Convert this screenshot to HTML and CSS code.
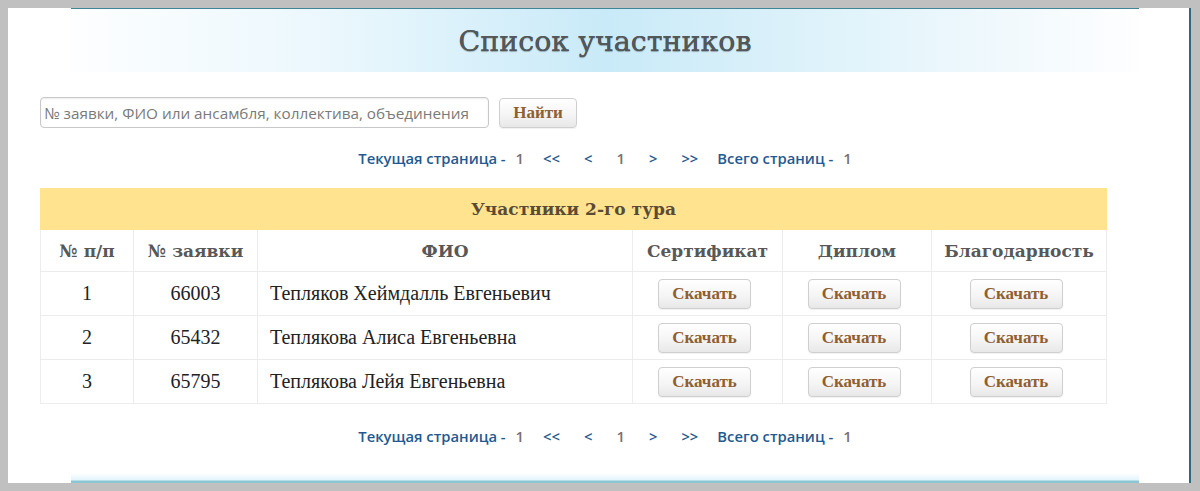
FILE: index.html
```html
<!DOCTYPE html>
<html lang="ru">
<head>
<meta charset="utf-8">
<title>Список участников</title>
<link rel="stylesheet" href="styles.css">
</head>
<body>
<div class="panel">
  <div class="banner"><h1 class="title">Список участников</h1></div>
  <div class="content">
    <form class="search">
      <input class="search-input" type="text" placeholder="№ заявки, ФИО или ансамбля, коллектива, объединения">
      <button class="btn btn-find" type="button">Найти</button>
    </form>
    <div class="pager">
      <span class="lbl">Текущая страница -</span><span class="num n1">1</span>
      <span class="lnk l1">&lt;&lt;</span><span class="lnk l2">&lt;</span><span class="num n2">1</span><span class="lnk l2">&gt;</span><span class="lnk l1b">&gt;&gt;</span>
      <span class="lbl l-tot">Всего страниц -</span><span class="num n1">1</span>
    </div>
    <table class="tbl">
      <colgroup>
        <col class="c1"><col class="c2"><col class="c3"><col class="c4"><col class="c5"><col class="c6">
      </colgroup>
      <thead>
        <tr><th class="cap" colspan="6">Участники 2-го тура</th></tr>
        <tr class="hdr"><th>№ п/п</th><th>№ заявки</th><th>ФИО</th><th>Сертификат</th><th>Диплом</th><th>Благодарность</th></tr>
      </thead>
      <tbody>
        <tr><td>1</td><td>66003</td><td class="name">Тепляков Хеймдалль Евгеньевич</td><td><button class="btn">Скачать</button></td><td><button class="btn">Скачать</button></td><td><button class="btn">Скачать</button></td></tr>
        <tr><td>2</td><td>65432</td><td class="name">Теплякова Алиса Евгеньевна</td><td><button class="btn">Скачать</button></td><td><button class="btn">Скачать</button></td><td><button class="btn">Скачать</button></td></tr>
        <tr><td>3</td><td>65795</td><td class="name">Теплякова Лейя Евгеньевна</td><td><button class="btn">Скачать</button></td><td><button class="btn">Скачать</button></td><td><button class="btn">Скачать</button></td></tr>
      </tbody>
    </table>
    <div class="pager pager-bottom">
      <span class="lbl">Текущая страница -</span><span class="num n1">1</span>
      <span class="lnk l1">&lt;&lt;</span><span class="lnk l2">&lt;</span><span class="num n2">1</span><span class="lnk l2">&gt;</span><span class="lnk l1b">&gt;&gt;</span>
      <span class="lbl l-tot">Всего страниц -</span><span class="num n1">1</span>
    </div>
  </div>
  <div class="footer-line"></div>
</div>
</body>
</html>
```
FILE: styles.css
```css
* { box-sizing: border-box; }
html, body { margin: 0; padding: 0; }
body {
  background: #c0c0c0;
  padding: 8px 0 0 8px;
  height: 491px;
  overflow: hidden;
}
.panel {
  width: 1183px;
  height: 475px;
  background: #fff;
  border-right: 2px solid #2f6a7c;
  display: flex;
  flex-direction: column;
}
.banner {
  margin-left: 63px;
  width: 1068px;
  height: 64px;
  border-top: 1px solid #3f8595;
  background: linear-gradient(to right, #fdfeff 0%, #eaf7fd 25%, #c9eaf8 50%, #e3f4fb 75%, #fefeff 100%);
  display: flex;
  align-items: center;
  justify-content: center;
}
.title {
  margin: 0;
  font-family: "DejaVu Serif", Georgia, serif;
  font-weight: normal;
  font-size: 28.5px;
  color: #52585a;
  text-shadow: 0 1px 1px rgba(0,0,0,0.3), 0 0 0.4px #52585a;
  padding-top: 2px;
}
.content { padding-left: 32px; }
.search {
  margin: 25px 0 0;
  display: flex;
  align-items: center;
}
.search-input {
  width: 449px;
  height: 31px;
  border: 1px solid #c8c8c8;
  border-radius: 4px;
  padding: 0 3px;
  font-family: "Open Sans", sans-serif;
  font-size: 15.3px;
  color: #333;
  box-shadow: inset 0 1px 2px rgba(0,0,0,0.08);
}
.search-input::placeholder { color: #7a7a7a; }
.btn {
  font-family: "Liberation Serif", "Times New Roman", serif;
  font-weight: bold;
  font-size: 17px;
  color: #8f5f30;
  background: linear-gradient(to bottom, #ffffff 0%, #f5f5f5 55%, #e8e8e8 100%);
  border: 1px solid #cfcfcf;
  border-radius: 4px;
  width: 93px;
  height: 30px;
  padding: 0;
  box-shadow: 0 1px 1px rgba(0,0,0,0.06);
}
.tbl td .btn { margin-right: 6px; }
.btn-find {
  width: 78px;
  height: 30px;
  margin-left: 10px;
}
.pager {
  height: 20px;
  margin-top: 20px;
  display: flex;
  justify-content: center;
  align-items: center;
  font-family: "Open Sans", sans-serif;
  font-weight: 600;
  font-size: 14.8px;
  width: 1066px;
  padding-left: 64px;
}
.lbl { color: #1f5a92; }
.num { color: #7a7070; }
.lnk { color: #1f5a92; }
.n1 { margin-left: 10px; }
.l1 { margin-left: 19px; }
.l2 { margin-left: 24px; }
.n2 { margin-left: 24px; }
.l1b { margin-left: 24px; }
.l-tot { margin-left: 19px; }
.tbl {
  margin-top: 20px;
  width: 1066px;
  border-collapse: collapse;
  table-layout: fixed;
}
.c1 { width: 93px; }
.c2 { width: 124px; }
.c3 { width: 375px; }
.c4 { width: 150px; }
.c5 { width: 149px; }
.c6 { width: 175px; }
.tbl th, .tbl td {
  border: 1px solid #ececec;
  text-align: center;
  padding: 0;
}
.tbl th.cap {
  background: #ffe38e;
  border-color: #ffe38e;
  height: 41px;
  font-family: "DejaVu Serif", Georgia, serif;
  font-weight: bold;
  font-size: 17px;
  color: #5b4a34;
}
.hdr th {
  height: 42px;
  font-family: "DejaVu Serif", Georgia, serif;
  font-weight: bold;
  font-size: 17px;
  color: #585858;
}
.tbl td {
  height: 44px;
  font-family: "Liberation Serif", "Times New Roman", serif;
  font-size: 20px;
  color: #222;
}
.tbl td.name {
  text-align: left;
  padding-left: 12px;
}
.pager-bottom { margin-top: 22px; }
.footer-line {
  margin-top: auto;
  margin-left: 63px;
  width: 1068px;
  height: 10px;
  background: linear-gradient(to bottom, rgba(225,244,251,0) 0%, #e2f4fb 70%, #8cc6d4 80%, #8cc6d4 100%);
}
```
